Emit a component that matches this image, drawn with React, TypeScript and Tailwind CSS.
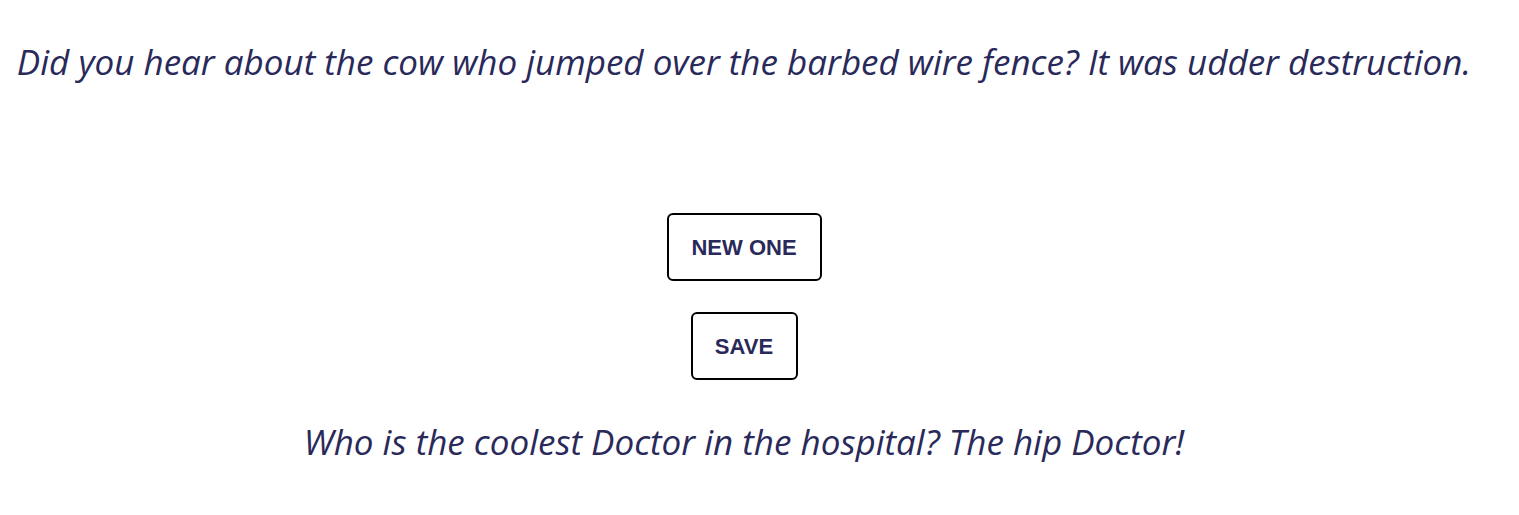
export default function App() {
  return (
    <div className="w-[1488px] bg-white flex flex-col items-center text-center">
      <p className="mt-[42px] h-[40px] leading-[40px] text-[35px] italic text-[#29295a] whitespace-nowrap font-['Open_Sans',sans-serif]">
        Did you hear about the cow who jumped over the barbed wire fence? It was udder destruction.
      </p>
      <button className="mt-[131px] w-[155px] h-[68px] border-2 border-black rounded-[6px] bg-white text-[22px] font-bold text-[#29295a] uppercase font-['Liberation_Sans',Arial,sans-serif]">
        New One
      </button>
      <button className="mt-[31px] w-[107px] h-[68px] border-2 border-black rounded-[6px] bg-white text-[22px] font-bold text-[#29295a] uppercase font-['Liberation_Sans',Arial,sans-serif]">
        Save
      </button>
      <p className="mt-[42px] h-[40px] leading-[40px] text-[35px] italic text-[#29295a] whitespace-nowrap font-['Open_Sans',sans-serif]">
        Who is the coolest Doctor in the hospital? The hip Doctor!
      </p>
    </div>
  );
}
